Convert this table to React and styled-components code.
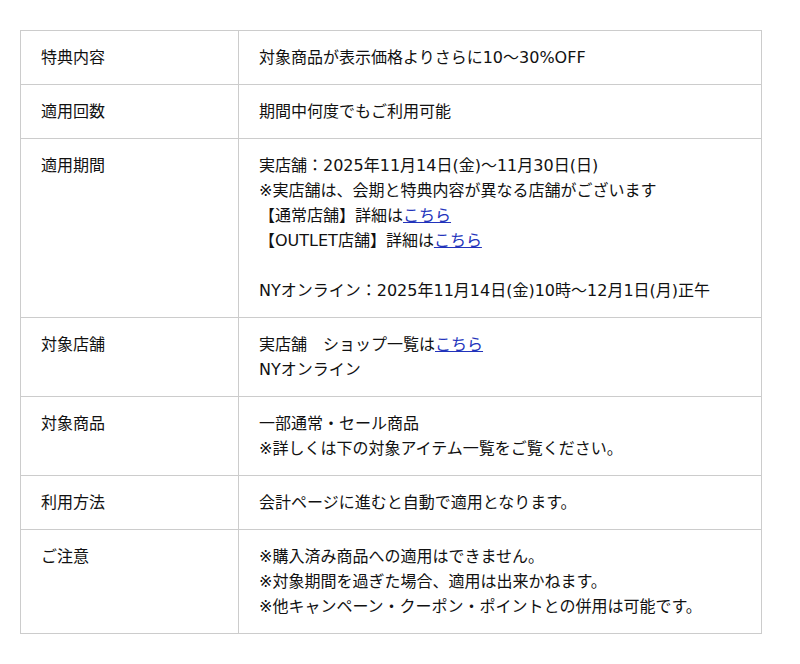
import React from "react";
import styled, { createGlobalStyle } from "styled-components";

const GlobalStyle = createGlobalStyle`
  body {
    margin: 0;
    background: #fff;
    font-family: "DejaVu Sans", "Noto Sans CJK JP", sans-serif;
    color: #111;
  }
`;

const Wrapper = styled.div`
  padding: 30px 38px 30px 20px;
`;

const Table = styled.table`
  width: 742px;
  border-collapse: collapse;
  font-size: 16px;
  line-height: 25px;
`;

const Row = styled.tr`
  border: 1px solid #cccccc;
`;

const Head = styled.th`
  width: 218px;
  padding: 14px 20px;
  text-align: left;
  vertical-align: top;
  font-weight: normal;
  border-right: 1px solid #cccccc;
  box-sizing: border-box;
`;

const Cell = styled.td`
  padding: 14px 20px;
  vertical-align: top;
  white-space: nowrap;
`;

const Line = styled.div`
  min-height: 25px;
`;

const Link = styled.a`
  color: #2233bb;
  text-decoration: underline;
`;

const rows = [
  { label: "特典内容", lines: ["対象商品が表示価格よりさらに10〜30%OFF"] },
  { label: "適用回数", lines: ["期間中何度でもご利用可能"] },
  {
    label: "適用期間",
    lines: [
      "実店舗：2025年11月14日(金)〜11月30日(日)",
      "※実店舗は、会期と特典内容が異なる店舗がございます",
      ["【通常店舗】詳細は", "こちら"],
      ["【OUTLET店舗】詳細は", "こちら"],
      "",
      "NYオンライン：2025年11月14日(金)10時〜12月1日(月)正午",
    ],
  },
  {
    label: "対象店舗",
    lines: [["実店舗　ショップ一覧は", "こちら"], "NYオンライン"],
  },
  {
    label: "対象商品",
    lines: ["一部通常・セール商品", "※詳しくは下の対象アイテム一覧をご覧ください。"],
  },
  { label: "利用方法", lines: ["会計ページに進むと自動で適用となります。"] },
  {
    label: "ご注意",
    lines: [
      "※購入済み商品への適用はできません。",
      "※対象期間を過ぎた場合、適用は出来かねます。",
      "※他キャンペーン・クーポン・ポイントとの併用は可能です。",
    ],
  },
];

export default function App() {
  return (
    <>
      <GlobalStyle />
      <Wrapper>
        <Table>
          <tbody>
            {rows.map((r) => (
              <Row key={r.label}>
                <Head>{r.label}</Head>
                <Cell>
                  {r.lines.map((l, i) =>
                    Array.isArray(l) ? (
                      <Line key={i}>
                        {l[0]}
                        <Link href="#">{l[1]}</Link>
                      </Line>
                    ) : (
                      <Line key={i}>{l}</Line>
                    )
                  )}
                </Cell>
              </Row>
            ))}
          </tbody>
        </Table>
      </Wrapper>
    </>
  );
}
